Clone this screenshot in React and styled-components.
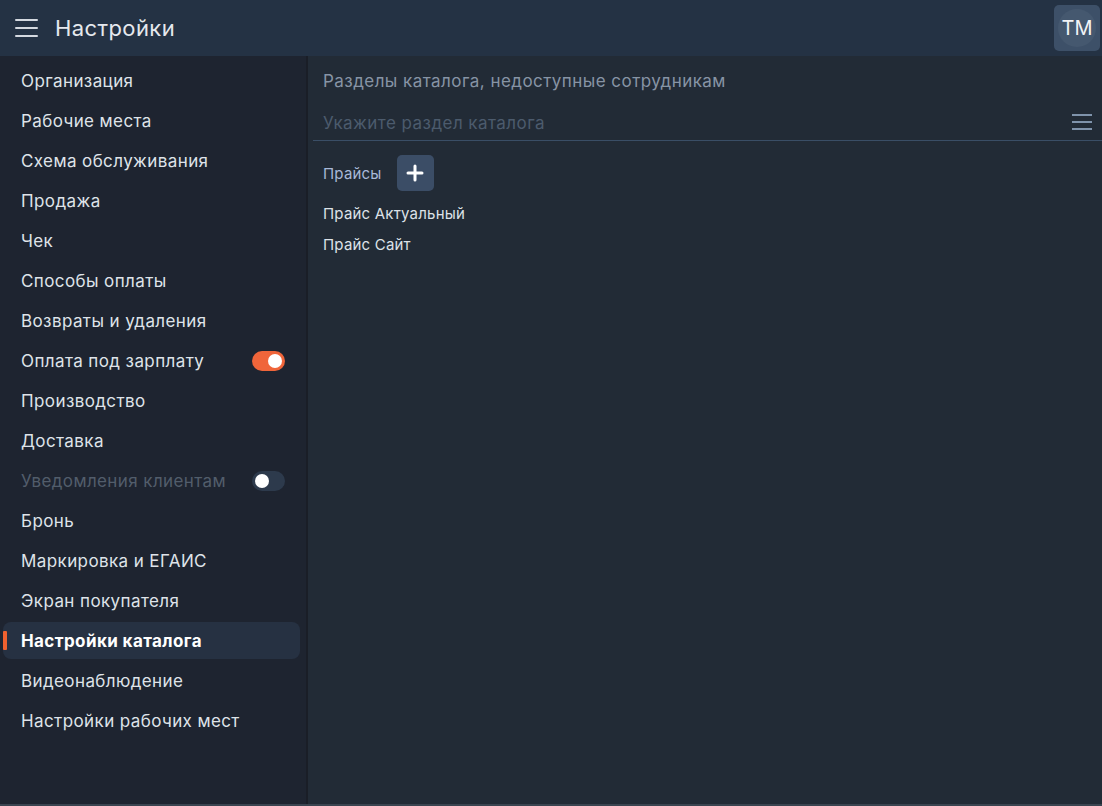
import React, { useState } from 'react'
import styled, { createGlobalStyle } from 'styled-components'

const GlobalStyle = createGlobalStyle`
  html, body { margin: 0; padding: 0; background: #222b36; }
  body { font-family: Inter, "Noto Sans", sans-serif; }
  * { box-sizing: border-box; }
`

const menu = [
  { title: 'Организация' },
  { title: 'Рабочие места' },
  { title: 'Схема обслуживания' },
  { title: 'Продажа' },
  { title: 'Чек' },
  { title: 'Способы оплаты' },
  { title: 'Возвраты и удаления' },
  { title: 'Оплата под зарплату', toggle: true, on: true },
  { title: 'Производство' },
  { title: 'Доставка' },
  { title: 'Уведомления клиентам', toggle: true, on: false, muted: true },
  { title: 'Бронь' },
  { title: 'Маркировка и ЕГАИС' },
  { title: 'Экран покупателя' },
  { title: 'Настройки каталога', active: true },
  { title: 'Видеонаблюдение' },
  { title: 'Настройки рабочих мест' },
]

const App = () => {
  const [items, setitems] = useState(menu)

  const toggleHandeler = (i) => {
    setitems(items.map((it, n) => n === i ? { ...it, on: !it.on } : it))
  }

  return (<>
    <GlobalStyle />
    <Page>
      <Header>
        <Burger>
          <span /><span /><span />
        </Burger>
        <Title>Настройки</Title>
        <Avatar><Circle>TM</Circle></Avatar>
      </Header>
      <Body>
        <Sidebar>
          {items.map((it, i) => (
            <Item key={it.title} $active={it.active} $muted={it.muted}>
              {it.title}
              {it.toggle && <Toggle $on={it.on} onClick={() => toggleHandeler(i)} />}
            </Item>
          ))}
        </Sidebar>
        <Main>
          <Heading>Разделы каталога, недоступные сотрудникам</Heading>
          <Field>
            <Input placeholder="Укажите раздел каталога" />
            <ListIcon>
              <span /><span /><span />
            </ListIcon>
          </Field>
          <GroupRow>
            <GroupLabel>Прайсы</GroupLabel>
            <AddButton>
              <svg width="18" height="18" viewBox="0 0 18 18">
                <path d="M9 2v14M2 9h14" stroke="#fff" strokeWidth="3" strokeLinecap="round" />
              </svg>
            </AddButton>
          </GroupRow>
          <PriceList>
            <Price>Прайс Актуальный</Price>
            <Price>Прайс Сайт</Price>
          </PriceList>
        </Main>
      </Body>
    </Page>
  </>
  )
}

const Page = styled.div`
width: 100vw;
height: 100vh;
display: flex;
flex-direction: column;
overflow: hidden;
border-bottom: 2px solid #3a4450;
`
const Header = styled.div`
height: 56px;
flex-shrink: 0;
background: #243244;
display: flex;
align-items: center;
padding: 0 2px 0 15px;
`
const Burger = styled.div`
width: 23px;
display: flex;
flex-direction: column;
gap: 6px;
span {
  display: block;
  height: 2px;
  background: #d4d9e0;
  border-radius: 1px;
}
`
const Title = styled.div`
margin-left: 17px;
color: #e6e9ee;
font-size: 22px;
letter-spacing: 0.4px;
flex: 1;
`
const Avatar = styled.div`
width: 46px;
height: 46px;
border-radius: 5px;
background: #3d5068;
display: flex;
align-items: center;
justify-content: center;
`
const Circle = styled.div`
width: 38px;
height: 38px;
border-radius: 50%;
background: #45586f;
color: #f1f3f6;
font-size: 20px;
display: flex;
align-items: center;
justify-content: center;
`
const Body = styled.div`
flex: 1;
display: flex;
min-height: 0;
`
const Sidebar = styled.div`
width: 308px;
flex-shrink: 0;
background: #1e2430;
border-right: 2px solid #1a1e27;
padding: 5px 6px 0 3px;
display: flex;
flex-direction: column;
`
const Item = styled.div`
position: relative;
display: flex;
align-items: center;
justify-content: space-between;
padding: 0 15px 0 18px;
font-size: 17px;
letter-spacing: 0.4px;
border-radius: 8px;
color: ${(p) => p.$muted ? '#525d6b' : '#dfe3e9'};
font-weight: ${(p) => p.$active ? 700 : 400};
background: ${(p) => p.$active ? '#263142' : 'transparent'};
height: ${(p) => p.$active ? '37px' : '40px'};
margin: ${(p) => p.$active ? '1px 0 2px' : '0'};
${(p) => p.$active && `
  color: #ffffff;
  &::before {
    content: '';
    position: absolute;
    left: 0;
    top: 9px;
    width: 4px;
    height: 19px;
    background: #f0612f;
    border-radius: 1px;
  }
`}
`
const Toggle = styled.div`
position: relative;
width: 33px;
height: 20px;
border-radius: 10px;
background: ${(p) => p.$on ? '#f0653a' : '#2d3a4c'};
cursor: pointer;
&::after {
  content: '';
  position: absolute;
  top: 3px;
  left: ${(p) => p.$on ? '16px' : '3px'};
  width: 14px;
  height: 14px;
  border-radius: 50%;
  background: #ffffff;
}
`
const Main = styled.div`
flex: 1;
background: #222b36;
padding: 0 0 0 5px;
display: flex;
flex-direction: column;
`
const Heading = styled.div`
padding: 15px 0 0 10px;
height: 45px;
font-size: 17px;
letter-spacing: 0.45px;
color: #8794a5;
`
const Field = styled.div`
display: flex;
align-items: center;
height: 40px;
border-bottom: 1px solid #3a4e66;
padding: 4px 10px 0 10px;
`
const Input = styled.input`
flex: 1;
background: transparent;
border: none;
outline: none;
font-family: inherit;
font-size: 17px;
letter-spacing: 0.45px;
color: #dfe3e9;
padding: 0;
&::placeholder { color: #4c5b6d; }
`
const ListIcon = styled.div`
width: 20px;
display: flex;
flex-direction: column;
gap: 5px;
margin-top: -2px;
span {
  display: block;
  height: 2px;
  background: #7f93ab;
}
`
const GroupRow = styled.div`
display: flex;
align-items: center;
gap: 15px;
padding: 14px 0 0 10px;
`
const GroupLabel = styled.div`
font-size: 15px;
letter-spacing: 0.2px;
color: #a9b9d8;
`
const AddButton = styled.button`
width: 37px;
height: 36px;
border: none;
border-radius: 5px;
background: #3b4d66;
display: flex;
align-items: center;
justify-content: center;
padding: 0;
`
const PriceList = styled.div`
display: flex;
flex-direction: column;
padding-top: 7px;
`
const Price = styled.div`
padding-left: 10px;
font-size: 15px;
letter-spacing: 0.2px;
color: #dde2e8;
height: 31px;
line-height: 31px;
`

export default App
